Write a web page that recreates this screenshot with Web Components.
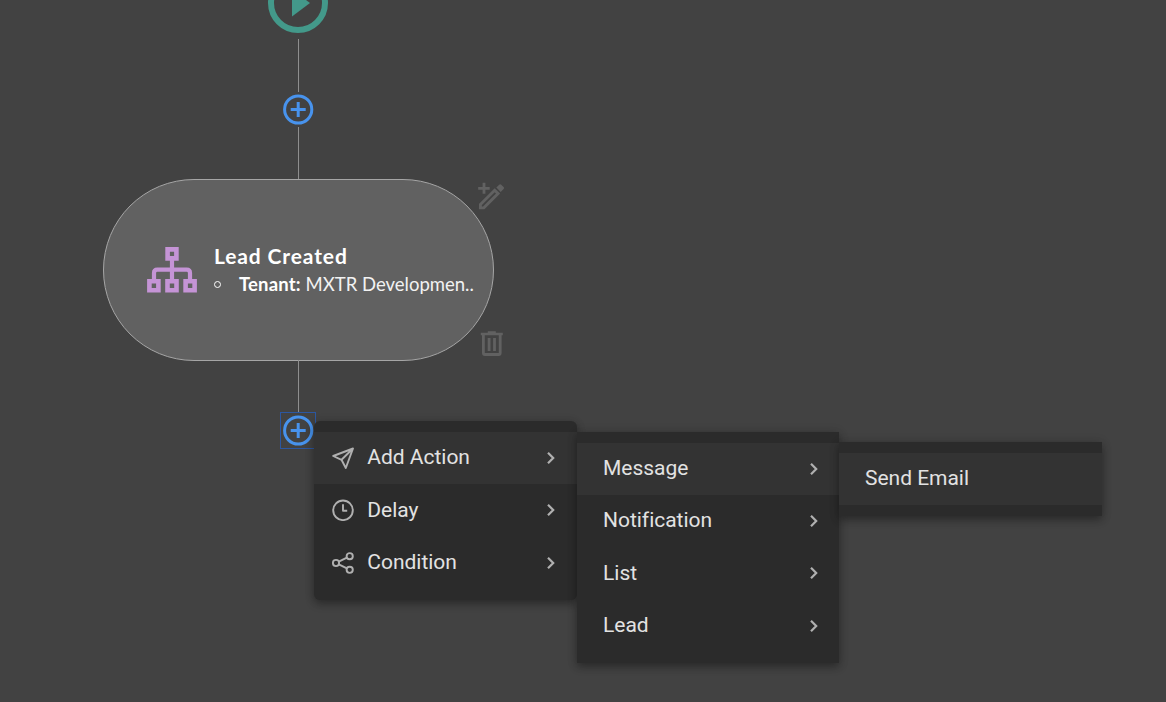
<!DOCTYPE html>
<html lang="en">
<head>
<meta charset="utf-8">
<title>Workflow editor</title>
<style>
html,body{margin:0;height:100%;background:#424242;overflow:hidden}
</style>
</head>
<body>
<flow-canvas>
  <flow-start style="left:268px;top:-27px"></flow-start>
  <flow-edge style="left:298px;top:39px;height:53px"></flow-edge>
  <flow-add style="left:280px;top:91px"></flow-add>
  <flow-edge style="left:298px;top:127px;height:53px"></flow-edge>
  <flow-node style="left:103px;top:179px">
    <span slot="title">Lead Created</span>
    <span slot="key">Tenant:</span>
    <span slot="value">MXTR Developmen..</span>
  </flow-node>
  <flow-edge style="left:298px;top:360px;height:52px"></flow-edge>
  <flow-add focused style="left:280px;top:412px"></flow-add>
  <menu-panel rounded style="left:314px;top:421px;width:263px;height:179px">
    <menu-item active more icon="send">Add Action</menu-item>
    <menu-item more icon="clock">Delay</menu-item>
    <menu-item more icon="share">Condition</menu-item>
  </menu-panel>
  <menu-panel style="left:577px;top:432px;width:262px;height:231px;--row:52.35px">
    <menu-item active more>Message</menu-item>
    <menu-item more>Notification</menu-item>
    <menu-item more>List</menu-item>
    <menu-item more>Lead</menu-item>
  </menu-panel>
  <menu-panel style="left:839px;top:442px;width:263px;height:74px">
    <menu-item active>Send Email</menu-item>
  </menu-panel>
</flow-canvas>
<script>
const define = (name, html, setup) => customElements.define(name, class extends HTMLElement {
  constructor() {
    super();
    this.attachShadow({ mode: 'open' }).innerHTML = html;
  }
  connectedCallback() { if (setup) setup(this, this.shadowRoot); }
});

define('flow-canvas', `
<style>
:host{display:block;position:relative;width:1166px;height:702px;overflow:hidden;background:#424242}
::slotted(*){position:absolute}
</style><slot></slot>`);

define('flow-start', `
<style>:host{display:block;width:60px;height:60px}svg{display:block}</style>
<svg width="60" height="60" viewBox="0 0 60 60"><circle cx="30" cy="30" r="27" fill="none" stroke="#43998a" stroke-width="6"/><path d="M24 16.5v27L42 30z" fill="#43998a"/></svg>`);

define('flow-edge', `<style>:host{display:block;width:1px;background:#8e8e8e}</style>`);

define('flow-add', `
<style>:host{display:block;width:36px;height:37px;box-sizing:border-box}
:host([focused]){box-shadow:inset 0 0 0 1px #2c57a0}svg{display:block}</style>
<svg width="36" height="37" viewBox="0 0 36 37" fill="none" stroke="#4893ed" stroke-width="3"><circle cx="18.2" cy="18.5" r="13.6"/><path d="M10.7 18.5h15M18.2 11v15"/></svg>`);

define('flow-node', `
<style>
:host{display:block;width:391px;height:182px;color:#fff;font-family:Lato,sans-serif}
.card{box-sizing:border-box;width:100%;height:100%;border:1px solid #a6a6a6;border-radius:91px;background:#616161;display:flex;align-items:center;padding-left:43px}
.tree{flex:none;width:50px;height:46px;margin-right:17px}
.text{white-space:nowrap}
.title{font-size:21px;font-weight:700;line-height:28px;letter-spacing:.87px}
.line{display:flex;align-items:center;font-size:18.5px;line-height:29px}
.dot{box-sizing:border-box;width:7px;height:7px;border:1px solid #fff;border-radius:50%;margin-right:18px}
.key{font-weight:700;letter-spacing:.15px;margin-right:5px}
.value{font-weight:400;letter-spacing:0;color:#f2f2f2}
.tool{position:absolute;display:block}
</style>
<div class="card">
  <svg class="tree" viewBox="0 0 50 46" fill="none" stroke="#c594d6" stroke-width="4.2"><path d="M20.6 2.4h8.8v9h-8.8zM2.4 34.3h9v9h-9zM20.5 34.3h9v9h-9zM38.6 34.3h9v9h-9z" stroke-width="4.6"/><path d="M25 13v19M7 32v-6q0-3.4 3.4-3.4h29.2q3.4 0 3.4 3.4v6"/></svg>
  <div class="text">
    <div class="title"><slot name="title"></slot></div>
    <div class="line"><i class="dot"></i><span class="key"><slot name="key"></slot></span><span class="value"><slot name="value"></slot></span></div>
  </div>
</div>
<svg class="tool" style="left:374px;top:2px" width="28" height="30" viewBox="0 0 28 30"><path d="M7 1.800v11M1.2 7.300h11.5" fill="none" stroke="#616161" stroke-width="2.8"/><path d="M3.4 23.5 17.700 9.200l3.400 3.400L6.800 26.900H3.400z" fill="none" stroke="#616161" stroke-width="2.9"/><path d="m19.300 6.600 2.900-2.900q1-1 2 0l2.400 2.400q1 1 0 2l-2.900 2.900z" fill="#616161"/></svg>
<svg class="tool" style="left:377px;top:152px" width="24" height="27" viewBox="0 0 24 27" fill="none" stroke="#616161"><path d="M.8 3h22M7.800 1.500h8" stroke-width="2.400"/><path d="M3.400 4v18q0 1.500 1.500 1.500h13.800q1.500 0 1.500-1.500V4" stroke-width="2.800"/><path d="M9.100 7v13M14.500 7v13" stroke-width="2.800"/></svg>`);

define('menu-panel', `
<style>
:host{display:flex;flex-direction:column;box-sizing:border-box;padding:10.5px 0;background:#2b2b2b;box-shadow:0 4px 8px rgba(0,0,0,.28),0 1px 10px rgba(0,0,0,.16)}
:host([rounded]){border-radius:6px}
</style><slot></slot>`);

const icons = {
  send: '<path d="M1.200 9 21 1.500 13.800 21 9.500 12.800zM9.500 12.800 21 1.500"/>',
  clock: '<circle cx="11" cy="11.300" r="9.800"/><path d="M11 5.300v6.500h4.200"/>',
  share: '<circle cx="4" cy="11" r="3.100"/><circle cx="17.700" cy="4.200" r="3.100"/><circle cx="17.700" cy="17.800" r="3.100"/><path d="m6.800 9.600 8.100-4M6.800 12.400l8.100 4"/>'
};
define('menu-item', `
<style>
:host{display:flex;flex:none;align-items:center;box-sizing:border-box;height:var(--row,52.5px);padding:0 20px 0 26px;font:400 21px/52px Roboto,sans-serif;letter-spacing:-.02px;color:#e2e2e2;white-space:nowrap}
:host([icon]){padding:0 21px 0 18px}
:host([active]){background:#333}
.icon{display:none;width:22px;height:22px;margin-right:13.300px}
:host([icon]) .icon{display:block}
.label{flex:1;position:relative;top:-.7px}
.arrow{display:none}
:host([more]) .arrow{display:block}
svg{display:block;fill:none;stroke:#b0b0b0}
</style>
<svg class="icon" viewBox="0 0 22 22" stroke-width="1.900" stroke-linejoin="round"></svg>
<span class="label"><slot></slot></span>
<svg class="arrow" width="10" height="14" viewBox="0 0 10 14" stroke-width="2.200"><path d="m2 1.800 5.200 5.200L2 12.200"/></svg>`,
(el, root) => { root.querySelector('.icon').innerHTML = icons[el.getAttribute('icon')] || ''; });
</script>
</body>
</html>
